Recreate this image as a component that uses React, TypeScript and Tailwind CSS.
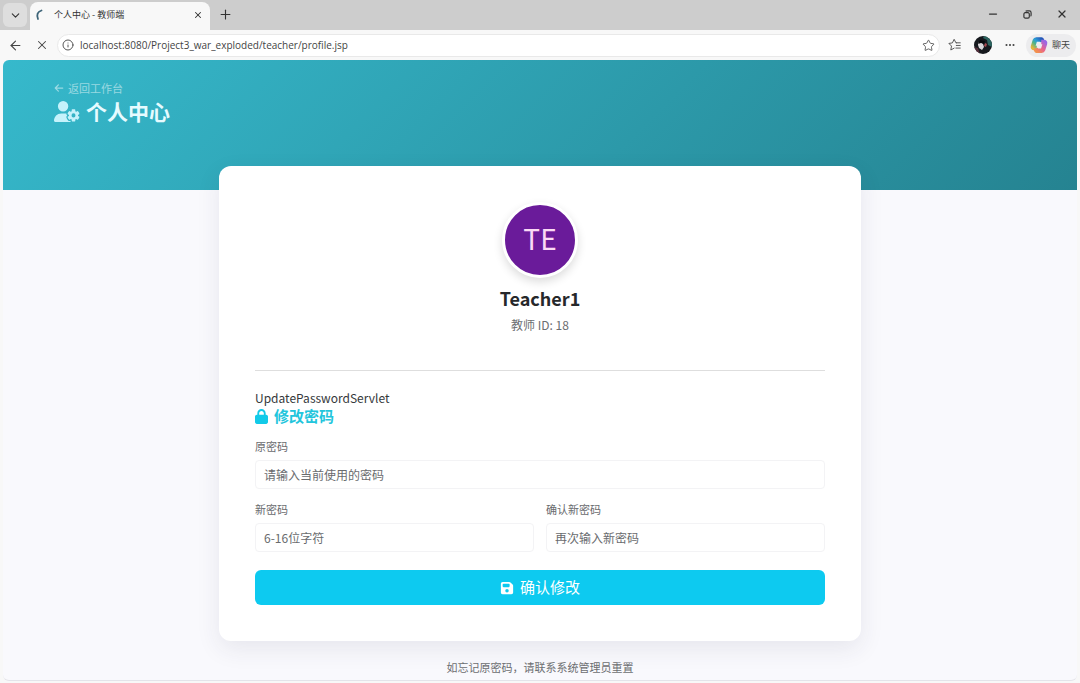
import { ChevronDown, Info, Minus, MoreHorizontal, Plus, Star, X, ArrowLeft } from "lucide-react";
import { FaArrowLeft, FaFloppyDisk, FaLock, FaUserGear } from "react-icons/fa6";

const CopilotLogo = () => (
  <svg viewBox="0 0 24 24" className="size-[18px]" fill="none" strokeWidth="6" strokeLinejoin="round" aria-hidden="true">
    <defs>
      <linearGradient id="cp-a" x1="0" y1="1" x2="1" y2="0">
        <stop offset="0" stopColor="#e0b63c" />
        <stop offset="0.35" stopColor="#4fb487" />
        <stop offset="0.6" stopColor="#2a9fd8" />
        <stop offset="1" stopColor="#2458b8" />
      </linearGradient>
      <linearGradient id="cp-b" x1="1" y1="0" x2="0" y2="1">
        <stop offset="0" stopColor="#9a66e6" />
        <stop offset="0.5" stopColor="#e8618f" />
        <stop offset="1" stopColor="#f2914e" />
      </linearGradient>
    </defs>
    <path d="M16.500 7.500 15.500 4.500H8.500Q7 4.500 6.500 6L4 14Q3.500 16 5.500 16H9" stroke="url(#cp-a)" />
    <path d="M7.500 16.500 8.500 19.500H15.500Q17 19.500 17.500 18L20 10Q20.500 8 18.500 8H15" stroke="url(#cp-b)" />
  </svg>
);

const ProfilePicture = () => (
  <svg viewBox="0 0 18 18" className="size-[18px] rounded-full" aria-hidden="true">
    <rect width="18" height="18" fill="#16191e" />
    <path d="M10 0h8v11l-4-2-1-5-4-2Z" fill="#2c6460" />
    <path d="M0 11l4 1 2 6H0Z" fill="#53303c" />
    <path d="M4 7l3-1 2 2 1 3-2 3-3-2-1-3Z" fill="#d9d5d9" />
    <path d="M11 7l2 1-1 3-2-1Z" fill="#a8484f" />
    <path d="M6 4l5 1-1 3-3-1-3 1Z" fill="#08090c" />
  </svg>
);

const FavoritesIcon = () => (
  <svg viewBox="0 0 16 16" className="size-[14px]" fill="none" stroke="currentColor" strokeLinecap="round" strokeLinejoin="round" aria-hidden="true">
    <path d="M9.500 5.500 9 5.400 7 1.500 5 5.600 1 6.200l3 3-.8 4.500L7 11.600" />
    <path d="M9.500 5.500H14M9.500 8.500H14M9 11.500h5" />
  </svg>
);

const RestoreIcon = () => (
  <svg viewBox="0 0 10 10" className="size-[9px]" fill="none" stroke="currentColor" strokeWidth="1.3" aria-hidden="true">
    <rect x="1" y="3" width="6" height="6" rx="1.500" />
    <path d="M3 1.500Q3.300 1 4.500 1H7q2 0 2 2v2.500q0 1-.6 1.400" />
  </svg>
);

const TabBar = () => (
  <header className="flex h-[30px] items-end bg-[#cdcdcd] text-[#333]">
    <button aria-label="标签页操作" className="mb-[3px] ml-[3px] flex size-6 items-center justify-center rounded-md bg-[#dedede]">
      <ChevronDown size={13} strokeWidth={2} />
    </button>
    <div className="ml-[3px] flex h-7 w-[180px] items-center rounded-t-lg bg-[#f8f8f8] pr-[7px] pb-0.5 pl-1">
      <svg viewBox="0 0 12 12" className="size-3" fill="none" aria-hidden="true">
        <path d="M7.500 1.500Q1.500 3.500 4 10" stroke="#3d6478" strokeWidth="1.800" strokeLinecap="round" />
      </svg>
      <span className="ml-2 flex-1 text-[9px] leading-4">个人中心 - 教师端</span>
      <button aria-label="关闭标签页">
        <X size={10} strokeWidth={2.500} />
      </button>
    </div>
    <button aria-label="新建标签页" className="mb-2 ml-2">
      <Plus size={15} strokeWidth={1.800} />
    </button>
    <div className="mb-2.5 ml-auto flex items-center gap-6 pr-3">
      <button aria-label="最小化"><Minus size={12} strokeWidth={2.500} /></button>
      <button aria-label="还原"><RestoreIcon /></button>
      <button aria-label="关闭"><X size={12} strokeWidth={2.500} /></button>
    </div>
  </header>
);

const Toolbar = () => (
  <div className="flex h-[30px] items-center bg-[#f8f8f8] pr-1 pl-2 text-[#444]">
    <button aria-label="后退"><ArrowLeft size={15} strokeWidth={1.800} /></button>
    <button aria-label="停止" className="ml-3"><X size={14} strokeWidth={1.800} /></button>
    <div className="ml-2 flex h-[23px] flex-1 items-center rounded-full border border-[#e9e9e9] bg-white px-1">
      <Info size={12} strokeWidth={1.800} />
      <input
        aria-label="地址"
        defaultValue="localhost:8080/Project3_war_exploded/teacher/profile.jsp"
        className="ml-1.5 min-w-0 flex-1 bg-transparent font-['Open_Sans',sans-serif] text-[10px] leading-4 outline-none"
      />
      <button aria-label="收藏此页"><Star size={13} strokeWidth={1.500} /></button>
    </div>
    <button aria-label="收藏夹" className="ml-2"><FavoritesIcon /></button>
    <button aria-label="个人资料" className="ml-3"><ProfilePicture /></button>
    <button aria-label="更多" className="ml-3"><MoreHorizontal size={12} strokeWidth={2.200} /></button>
    <button className="ml-2.5 flex h-[23px] items-center gap-1 rounded-full bg-[#ececee] pr-1.5 pl-1 text-[9px]">
      <CopilotLogo />
      聊天
    </button>
  </div>
);

type FieldProps = { id: string; label: string; placeholder: string };

const Field = ({ id, label, placeholder }: FieldProps) => (
  <div className="flex-1">
    <label htmlFor={id} className="block text-[11px] leading-4 text-[#696b6e]">
      {label}
    </label>
    <input
      id={id}
      type="password"
      placeholder={placeholder}
      className="mt-1.5 block h-[29px] w-full rounded-sm border border-[#f3f3f5] bg-white px-2 text-xs text-[#333] outline-none placeholder:text-[#696b6e]"
    />
  </div>
);

const ProfileCard = () => (
  <section className="mx-auto -mt-6 w-full max-w-[642px] rounded-xl bg-white p-9 shadow-[0_8px_24px_rgba(40,40,80,0.09)]">
    <div className="flex flex-col items-center">
      <div className="flex size-[76px] justify-center rounded-full border-3 border-white bg-[#6a1b9a] text-[28px] leading-[66px] text-[#fbd9f5] shadow-[0_4px_10px_rgba(0,0,0,0.14)]">
        TE
      </div>
      <h2 className="mt-2 text-lg leading-6 font-bold text-[#26282b]">Teacher1</h2>
      <p className="mt-1.5 text-xs leading-[18px] text-[#6c6e71]">教师 ID: 18</p>
    </div>
    <hr className="mt-9 border-[#dedede]" />
    <form className="mt-[18px]" onSubmit={(e) => e.preventDefault()}>
      <p className="text-xs leading-[18px] text-[#35383b]">UpdatePasswordServlet</p>
      <h3 className="flex items-center gap-1.5 text-[15px] leading-[18px] font-bold text-[#22c5dc]">
        <FaLock className="w-[13px] text-[#12cae8]" />
        修改密码
      </h3>
      <div className="mt-[13px] flex">
        <Field id="oldPassword" label="原密码" placeholder="请输入当前使用的密码" />
      </div>
      <div className="mt-3 flex gap-3">
        <Field id="newPassword" label="新密码" placeholder="6-16位字符" />
        <Field id="confirmPassword" label="确认新密码" placeholder="再次输入新密码" />
      </div>
      <button type="submit" className="mt-[18px] flex h-[35px] w-full items-center justify-center gap-1.5 rounded-md bg-[#0dcaf0] text-[15px] text-white">
        <FaFloppyDisk size={14} />
        确认修改
      </button>
    </form>
  </section>
);

export default function App() {
  return (
    <div className="flex min-h-screen flex-col bg-[#f8f8f8] font-['Noto_Sans_CJK_SC',sans-serif]">
      <TabBar />
      <Toolbar />
      <main className="mx-[3px] mb-0.5 flex-1 rounded-md border-b border-[#e4e4ea] bg-[#f9f9fd]">
        <div className="h-[130px] rounded-t-md bg-linear-135 from-[#36b9cc] to-[#258391] px-[51px] pt-5">
          <a href="#" className="flex items-center gap-1 text-[11px] leading-4 text-white/50">
            <FaArrowLeft size={10} />
            返回工作台
          </a>
          <h1 className="mt-0.5 flex items-center gap-1.5 text-[21px] leading-[26px] font-bold text-[#e6fbff]">
            <FaUserGear className="h-[21px] w-[26px] text-[#c5f2fb]" />
            个人中心
          </h1>
        </div>
        <ProfileCard />
        <p className="mt-[18px] text-center text-[11px] leading-4 text-[#6c6e71]">如忘记原密码，请联系系统管理员重置</p>
      </main>
    </div>
  );
}
